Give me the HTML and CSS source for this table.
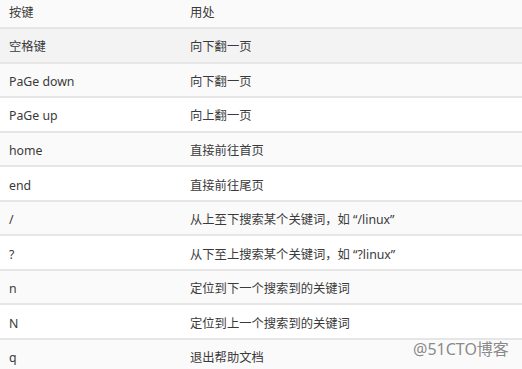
FILE: index.html
```html
<!DOCTYPE html>
<html lang="zh-CN">
<head>
<meta charset="utf-8">
<title>按键</title>
<link rel="stylesheet" href="styles.css">
</head>
<body>
<div class="page">
  <div class="table">
    <div class="row head"><div class="c1">按键</div><div class="c2">用处</div></div>
    <div class="row hover"><div class="c1">空格键</div><div class="c2">向下翻一页</div></div>
    <div class="row odd"><div class="c1">PaGe down</div><div class="c2">向下翻一页</div></div>
    <div class="row"><div class="c1">PaGe up</div><div class="c2">向上翻一页</div></div>
    <div class="row odd"><div class="c1">home</div><div class="c2">直接前往首页</div></div>
    <div class="row"><div class="c1">end</div><div class="c2">直接前往尾页</div></div>
    <div class="row odd"><div class="c1">/</div><div class="c2">从上至下搜索某个关键词，如 “/linux”</div></div>
    <div class="row"><div class="c1">?</div><div class="c2">从下至上搜索某个关键词，如 “?linux”</div></div>
    <div class="row odd"><div class="c1">n</div><div class="c2">定位到下一个搜索到的关键词</div></div>
    <div class="row"><div class="c1">N</div><div class="c2">定位到上一个搜索到的关键词</div></div>
    <div class="row odd"><div class="c1">q</div><div class="c2">退出帮助文档</div></div>
  </div>
  <div class="watermark">@51CTO博客</div>
</div>
</body>
</html>
```
FILE: styles.css
```css
html, body {
  margin: 0;
  padding: 0;
  background: #ffffff;
}
.page {
  position: relative;
  width: 522px;
  height: 369px;
  overflow: hidden;
}
.table {
  margin-top: -5.5px;
  font-family: "Noto Sans", "Noto Sans CJK SC", sans-serif;
  font-size: 12.3px;
  color: #3a3a3a;
}
.row {
  display: grid;
  grid-template-columns: 181px 1fr;
  align-items: center;
  height: 34.56px;
  box-sizing: border-box;
  border-bottom: 2px solid #e6e6e6;
  background: #ffffff;
}
.row.head { background: #fafafa; }
.row.hover { background: #f3f3f3; }
.row.odd { background: #fafafa; }
.c1, .c2 {
  padding-left: 9px;
  padding-top: 4px;
  white-space: nowrap;
  line-height: 16px;
}
.watermark {
  position: absolute;
  left: 413px;
  top: 338px;
  font-family: "Noto Sans", "Noto Sans CJK SC", sans-serif;
  font-size: 16px;
  line-height: 22px;
  color: #8a8a8a;
  text-shadow: 0 0 2px #ffffff, 0 0 1px #ffffff;
}
```
